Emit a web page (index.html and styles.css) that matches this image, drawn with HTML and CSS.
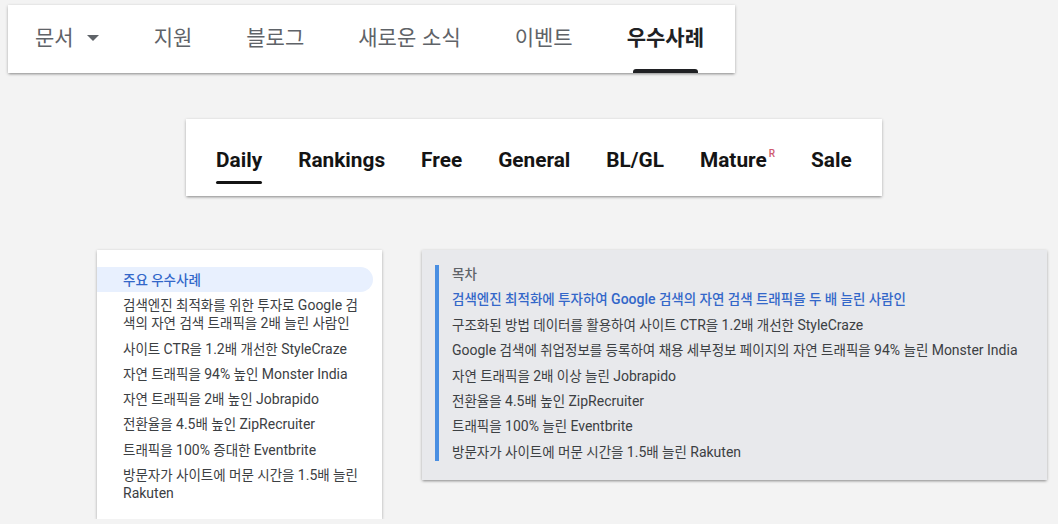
FILE: index.html
```html
<!DOCTYPE html>
<html lang="ko">
<head>
<meta charset="utf-8">
<title>우수사례</title>
<link rel="stylesheet" href="styles.css">
</head>
<body>
<nav class="topnav">
  <a class="nav-item">문서<svg class="caret" viewBox="0 0 12 6"><path d="M0 0H12L6 6Z"/></svg></a>
  <a class="nav-item">지원</a>
  <a class="nav-item">블로그</a>
  <a class="nav-item">새로운 소식</a>
  <a class="nav-item">이벤트</a>
  <a class="nav-item active">우수사례</a>
</nav>

<div class="tabs">
  <span class="tab active">Daily</span>
  <span class="tab">Rankings</span>
  <span class="tab">Free</span>
  <span class="tab">General</span>
  <span class="tab">BL/GL</span>
  <span class="tab">Mature<sup class="mark">R</sup></span>
  <span class="tab">Sale</span>
</div>

<div class="row">
  <aside class="side">
    <ul class="side-list">
      <li class="current">주요 우수사례</li>
      <li>검색엔진 최적화를 위한 투자로 <span class="en">Google</span> 검<br>색의 자연 검색 트래픽을 <span class="en">2</span>배 늘린 사람인</li>
      <li>사이트 <span class="en">CTR</span>을 <span class="en">1.2</span>배 개선한 <span class="en">StyleCraze</span></li>
      <li>자연 트래픽을 <span class="en">94%</span> 높인 <span class="en">Monster India</span></li>
      <li>자연 트래픽을 <span class="en">2</span>배 높인 <span class="en">Jobrapido</span></li>
      <li>전환율을 <span class="en">4.5</span>배 높인 <span class="en">ZipRecruiter</span></li>
      <li>트래픽을 <span class="en">100%</span> 증대한 <span class="en">Eventbrite</span></li>
      <li>방문자가 사이트에 머문 시간을 <span class="en">1.5</span>배 늘린 <span class="en">Rakuten</span></li>
    </ul>
  </aside>

  <section class="box">
    <div class="box-inner">
      <div class="box-title">목차</div>
      <ul class="box-list">
        <li class="current">검색엔진 최적화에 투자하여 <span class="en">Google</span> 검색의 자연 검색 트래픽을 두 배 늘린 사람인</li>
        <li>구조화된 방법 데이터를 활용하여 사이트 <span class="en">CTR</span>을 <span class="en">1.2</span>배 개선한 <span class="en">StyleCraze</span></li>
        <li><span class="en">Google</span> 검색에 취업정보를 등록하여 채용 세부정보 페이지의 자연 트래픽을 <span class="en">94%</span> 늘린 <span class="en">Monster India</span></li>
        <li>자연 트래픽을 <span class="en">2</span>배 이상 늘린 <span class="en">Jobrapido</span></li>
        <li>전환율을 <span class="en">4.5</span>배 높인 <span class="en">ZipRecruiter</span></li>
        <li>트래픽을 <span class="en">100%</span> 늘린 <span class="en">Eventbrite</span></li>
        <li>방문자가 사이트에 머문 시간을 <span class="en">1.5</span>배 늘린 <span class="en">Rakuten</span></li>
      </ul>
    </div>
  </section>
</div>
</body>
</html>
```

FILE: styles.css
```css
body {
  margin: 0;
  background: #f3f3f3;
  font-family: Roboto, "Noto Sans CJK KR", sans-serif;
}

ul {
  list-style: none;
  margin: 0;
  padding: 0;
}

/* top navigation */
.topnav {
  box-sizing: border-box;
  width: 727px;
  height: 68px;
  margin: 5px 0 0 8px;
  padding-left: 27px;
  display: flex;
  gap: 54px;
  background: #fff;
  box-shadow: 0 1px 3px rgba(0, 0, 0, 0.28), 0 2px 2px -1px rgba(0, 0, 0, 0.2);
}

.nav-item {
  position: relative;
  display: flex;
  align-items: center;
  padding-bottom: 7px;
  font-family: "Noto Sans CJK KR", sans-serif;
  font-size: 21px;
  color: #5f6368;
  white-space: nowrap;
}

.caret {
  width: 14px;
  height: 6px;
  margin: 5px 0 0 12px;
  fill: #5f6368;
}

.nav-item.active {
  color: #202124;
  font-weight: 700;
}

.nav-item.active::after {
  content: "";
  position: absolute;
  left: 6px;
  right: 6px;
  bottom: 0;
  height: 4px;
  border-radius: 3px 3px 0 0;
  background: #202124;
}

/* category tabs */
.tabs {
  box-sizing: border-box;
  width: 696px;
  height: 77px;
  margin: 46px 0 0 186px;
  padding: 0 30px;
  display: flex;
  gap: 36px;
  background: #fff;
  box-shadow: 0 1px 3px rgba(0, 0, 0, 0.28), 0 2px 2px -1px rgba(0, 0, 0, 0.2);
}

.tab {
  position: relative;
  padding-top: 29px;
  font-size: 20.8px;
  line-height: 24px;
  font-weight: 700;
  color: #141414;
  white-space: nowrap;
}

.tab.active::after {
  content: "";
  position: absolute;
  left: 0;
  right: 0;
  top: 62px;
  height: 3px;
  border-radius: 2px;
  background: #141414;
}

.mark {
  vertical-align: top;
  position: relative;
  top: 1px;
  font-size: 10px;
  line-height: 10px;
  font-weight: 500;
  color: #cf5a6e;
  margin-left: 2px;
}

/* lower row */
.row {
  display: flex;
  align-items: flex-start;
  gap: 40px;
  margin: 54px 0 0 97px;
}

.en {
  font-size: 14px;
  line-height: 1;
}

.side {
  box-sizing: border-box;
  width: 285px;
  height: 269px;
  padding-top: 17px;
  background: #fff;
  box-shadow: 0 1px 3px rgba(0, 0, 0, 0.28), 0 2px 2px -1px rgba(0, 0, 0, 0.2);
}

.side-list li {
  margin-right: 9px;
  padding: 4px 4px 3.3px 26px;
  font-size: 13.5px;
  line-height: 18px;
  color: #3c4043;
}

.side-list li.current {
  background: #e8f0fe;
  border-radius: 0 13px 13px 0;
  color: #3367c9;
  font-weight: 500;
}

.box {
  box-sizing: border-box;
  width: 625px;
  height: 230px;
  padding: 15px 0 0 13px;
  background: #e8e9ec;
  box-shadow: 0 1px 3px rgba(0, 0, 0, 0.28), 0 2px 2px -1px rgba(0, 0, 0, 0.2);
}

.box-inner {
  border-left: 4px solid #4a8fe2;
  padding-left: 13px;
  font-size: 13.5px;
  line-height: 18px;
  color: #3c4043;
}

.box-title {
  color: #5f6368;
  font-weight: 500;
}

.box-list li {
  margin-top: 7.4px;
}

.box-list li.current {
  color: #3367c9;
  font-weight: 500;
}
```
